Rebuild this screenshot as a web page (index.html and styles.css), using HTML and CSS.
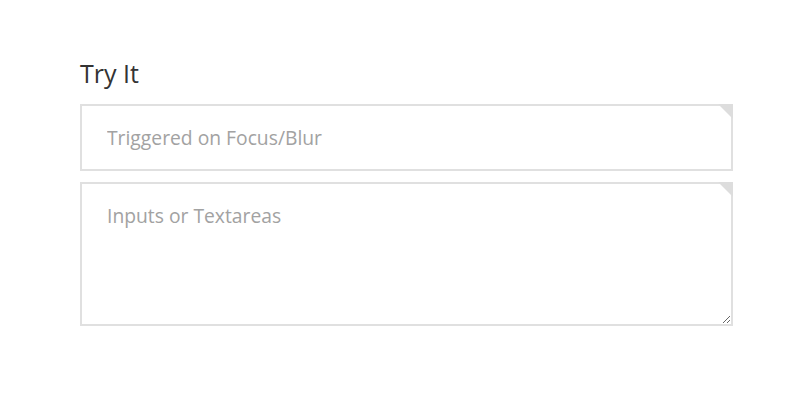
FILE: index.html
```html
<!DOCTYPE html>
<html>
<head>
<meta charset="utf-8">
<link rel="stylesheet" href="styles.css">
</head>
<body>
<div class="page">
  <h2 class="title">Try It</h2>
  <div class="field">
    <input class="control input" type="text" placeholder="Triggered on Focus/Blur">
  </div>
  <div class="field">
    <textarea class="control area" placeholder="Inputs or Textareas"></textarea>
  </div>
</div>
</body>
</html>
```
FILE: styles.css
```css
html, body {
  margin: 0;
  padding: 0;
  background: #fff;
}
body {
  font-family: "Open Sans", "Liberation Sans", sans-serif;
}
.page {
  width: 653px;
  margin-left: 80px;
  padding-top: 55px;
  display: flex;
  flex-direction: column;
}
.title {
  margin: 0 0 12px 0;
  font-size: 25px;
  font-weight: 400;
  line-height: 37px;
  color: #333;
}
.field {
  position: relative;
  margin-bottom: 11px;
}
.field::after {
  content: "";
  position: absolute;
  top: 0;
  right: 0;
  width: 0;
  height: 0;
  border-style: solid;
  border-width: 0 15px 15px 0;
  border-color: transparent #ddd transparent transparent;
}
.control {
  display: block;
  box-sizing: border-box;
  width: 100%;
  margin: 0;
  border: 2px solid #e0e0e0;
  border-radius: 0;
  background: #fff;
  font-family: "Open Sans", "Liberation Sans", sans-serif;
  font-size: 19.3px;
  line-height: 28px;
  color: #555;
  padding: 18px 25px;
  outline: none;
}
.control::placeholder {
  color: #a2a2a2;
}
.input {
  height: 67px;
}
.area {
  height: 144px;
  padding-top: 18px;
  resize: both;
}
```
